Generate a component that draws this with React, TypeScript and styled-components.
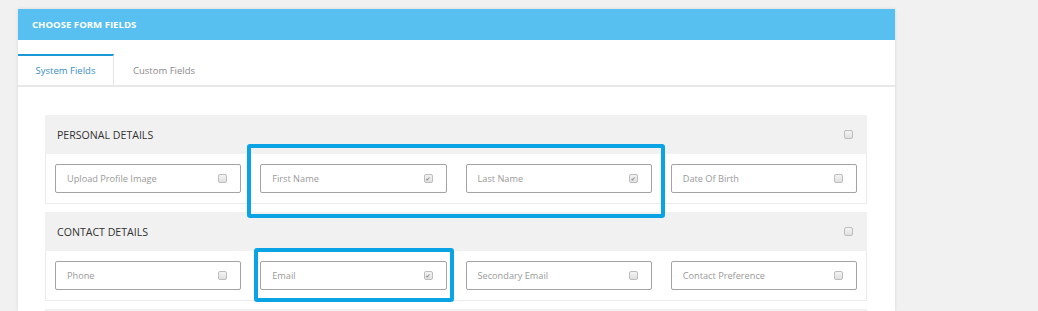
import { createGlobalStyle, styled } from "styled-components";

const GlobalStyle = createGlobalStyle`
  html, body {
    margin: 0;
    padding: 0;
    background: #f1f1f1;
    font-family: "Open Sans", "Liberation Sans", Arial, sans-serif;
  }
  * {
    box-sizing: border-box;
  }
`;

const Panel = styled.div`
  margin: 9px 0 0 18px;
  width: 877px;
  background: #fff;
  box-shadow: 0 0 3px rgba(0, 0, 0, 0.12);
  height: 302px;
  overflow: hidden;
`;

const PanelHeader = styled.div`
  height: 31px;
  background: #58c0f0;
  color: #fff;
  font-size: 9.6px;
  font-weight: 700;
  text-transform: uppercase;
  display: flex;
  align-items: center;
  padding-left: 14px;
`;

const Tabs = styled.div`
  height: 47px;
  display: flex;
  align-items: flex-end;
  border-bottom: 2px solid #e8e8e8;
`;

const Tab = styled.div<{ $active?: boolean }>`
  height: 31px;
  display: flex;
  align-items: center;
  justify-content: center;
  white-space: nowrap;
  padding: 0 19px;
  font-size: 9.5px;
  color: ${({ $active }) => ($active ? "#3a8ec7" : "#8a8a8a")};
  border-top: 2px solid ${({ $active }) => ($active ? "#1b98d8" : "transparent")};
  border-right: 1px solid ${({ $active }) => ($active ? "#e6e6e6" : "transparent")};
  width: ${({ $active }) => ($active ? "96px" : "auto")};
`;

const Content = styled.div`
  position: relative;
  padding: 28px 28px 0 27px;
  display: flex;
  flex-direction: column;
  gap: 8px;
`;

const Section = styled.div`
  display: flex;
  flex-direction: column;
`;

const SectionHeader = styled.div`
  height: 39px;
  background: #f1f1f1;
  display: flex;
  align-items: center;
  justify-content: space-between;
  padding: 0 14px 0 12px;
  font-size: 10.6px;
  color: #333;
  text-transform: uppercase;
`;

const FieldRow = styled.div`
  border: 1px solid #ebebeb;
  border-top: none;
  padding: 10px 9px;
  display: grid;
  grid-template-columns: repeat(4, 1fr);
  gap: 19px;
`;

const Field = styled.div`
  height: 29px;
  border: 1px solid #a3a3a3;
  border-radius: 2px;
  display: flex;
  align-items: center;
  justify-content: space-between;
  padding: 0 13px 0 11px;
  font-size: 9.2px;
  color: #9a9a9a;
`;

const Check = styled.span<{ $checked?: boolean }>`
  width: 9px;
  height: 9px;
  border: 1px solid #bdbdbd;
  border-radius: 2px;
  background: linear-gradient(#f4f4f4, #e0e0e0);
  display: flex;
  align-items: center;
  justify-content: center;
  font-size: 6px;
  line-height: 1;
  color: #8c8c8c;
  font-family: "DejaVu Sans", sans-serif;
`;

const Highlight = styled.div<{ $left: number; $top: number; $w: number; $h: number }>`
  position: absolute;
  left: ${({ $left }) => $left}px;
  top: ${({ $top }) => $top}px;
  width: ${({ $w }) => $w}px;
  height: ${({ $h }) => $h}px;
  border: 4px solid #0aa3e3;
  border-radius: 3px;
  pointer-events: none;
`;

interface IField {
  label: string;
  checked?: boolean;
}

const sections: { title: string; fields: IField[] }[] = [
  {
    title: "Personal Details",
    fields: [
      { label: "Upload Profile Image" },
      { label: "First Name", checked: true },
      { label: "Last Name", checked: true },
      { label: "Date Of Birth" },
    ],
  },
  {
    title: "Contact Details",
    fields: [
      { label: "Phone" },
      { label: "Email", checked: true },
      { label: "Secondary Email" },
      { label: "Contact Preference" },
    ],
  },
];

function App() {
  return (
    <>
      <GlobalStyle />
      <Panel>
        <PanelHeader>Choose Form Fields</PanelHeader>
        <Tabs>
          <Tab $active>System Fields</Tab>
          <Tab>Custom Fields</Tab>
        </Tabs>
        <Content>
          {sections.map((s) => (
            <Section key={s.title}>
              <SectionHeader>
                {s.title}
                <Check />
              </SectionHeader>
              <FieldRow>
                {s.fields.map((f) => (
                  <Field key={f.label}>
                    {f.label}
                    <Check $checked={f.checked}>{f.checked ? "✔" : ""}</Check>
                  </Field>
                ))}
              </FieldRow>
            </Section>
          ))}
          <Section>
            <SectionHeader />
          </Section>
          <Highlight $left={229} $top={57} $w={418} $h={74} />
          <Highlight $left={236} $top={161} $w={200} $h={54} />
        </Content>
      </Panel>
    </>
  );
}

export default App;
